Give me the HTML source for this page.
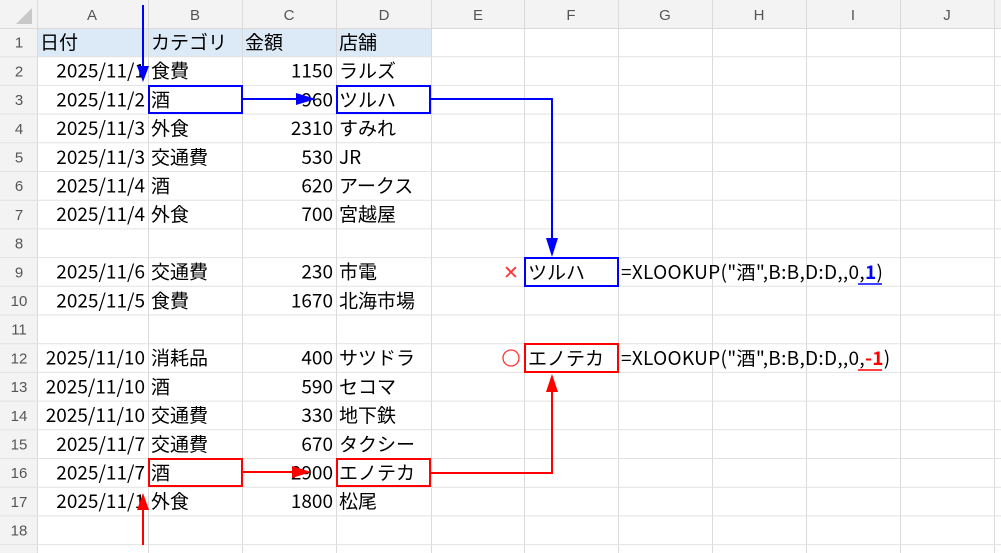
<!DOCTYPE html>
<html><head><meta charset="utf-8"><style>
html,body{margin:0;padding:0;background:#fff;width:1001px;height:553px;overflow:hidden}
svg{display:block}
text{font-family:"Noto Sans CJK JP","Liberation Sans",sans-serif;font-size:19px;fill:#000}
.h{font-family:"Liberation Sans",sans-serif;font-size:15px;fill:#555;text-anchor:middle}
.r{text-anchor:end}
.f{letter-spacing:0.3px}
</style></head><body>
<svg width="1001" height="553" xmlns="http://www.w3.org/2000/svg">
<rect x="0" y="0" width="1001" height="28" fill="#f3f3f3"/>
<rect x="0" y="28" width="37" height="525" fill="#f3f3f3"/>
<rect x="37" y="28" width="394" height="28.7" fill="#dce9f6"/>
<g stroke="#dadada" stroke-width="1">
<line x1="0" y1="28.5" x2="1001" y2="28.5"/>
<line x1="37.5" y1="0" x2="37.5" y2="553"/>
<line x1="148.5" y1="0" x2="148.5" y2="553"/><line x1="242.5" y1="0" x2="242.5" y2="553"/>
<line x1="336.5" y1="0" x2="336.5" y2="553"/><line x1="431.5" y1="0" x2="431.5" y2="553"/>
<line x1="524.5" y1="0" x2="524.5" y2="553"/><line x1="618.5" y1="0" x2="618.5" y2="553"/>
<line x1="712.5" y1="0" x2="712.5" y2="553"/><line x1="806.5" y1="0" x2="806.5" y2="553"/>
<line x1="900.5" y1="0" x2="900.5" y2="553"/><line x1="994.5" y1="0" x2="994.5" y2="553"/>
</g>
<g stroke="#e2e2e2" id="rl"></g>
<polygon points="32,24 32,8 16,24" fill="#c8c8c8"/>
<text class="h" x="92" y="20">A</text><text class="h" x="195" y="20">B</text><text class="h" x="289" y="20">C</text><text class="h" x="384" y="20">D</text><text class="h" x="478" y="20">E</text><text class="h" x="571" y="20">F</text><text class="h" x="665" y="20">G</text><text class="h" x="759" y="20">H</text><text class="h" x="853" y="20">I</text><text class="h" x="947" y="20">J</text>
<script>
var s=document.querySelector('svg'),g=document.getElementById('rl'),ns='http://www.w3.org/2000/svg';
for(var r=1;r<=18;r++){var y=28+r*28.7;var l=document.createElementNS(ns,'line');l.setAttribute('x1',0);l.setAttribute('x2',1001);l.setAttribute('y1',y);l.setAttribute('y2',y);g.appendChild(l);
var t=document.createElementNS(ns,'text');t.setAttribute('class','h');t.setAttribute('x',19);t.setAttribute('y',y-9);t.textContent=r;s.appendChild(t);}
var d=[["日付","カテゴリ","金額","店舗"],["2025/11/1","食費","1150","ラルズ"],["2025/11/2","酒","960","ツルハ"],["2025/11/3","外食","2310","すみれ"],["2025/11/3","交通費","530","JR"],["2025/11/4","酒","620","アークス"],["2025/11/4","外食","700","宮越屋"],null,["2025/11/6","交通費","230","市電"],["2025/11/5","食費","1670","北海市場"],null,["2025/11/10","消耗品","400","サツドラ"],["2025/11/10","酒","590","セコマ"],["2025/11/10","交通費","330","地下鉄"],["2025/11/7","交通費","670","タクシー"],["2025/11/7","酒","2900","エノテカ"],["2025/11/1","外食","1800","松尾"]];
function tx(x,y,c,cls){var t=document.createElementNS(ns,'text');t.setAttribute('x',x);t.setAttribute('y',y);if(cls)t.setAttribute('class',cls);t.textContent=c;s.appendChild(t);}
d.forEach(function(row,i){if(!row)return;var y=28+i*28.7+21;
if(i==0){tx(40,y,row[0]);tx(151,y,row[1]);tx(245,y,row[2]);}
else{tx(145,y,row[0],'r');tx(333,y,row[2],'r');tx(151,y,row[1]);}
tx(339,y,row[3]);});
</script>
<text x="528" y="279">ツルハ</text>
<text class="f" x="621" y="279">=XLOOKUP("酒",B:B,D:D,,0,<tspan font-weight="bold" style="fill:#00f">1</tspan>)</text>
<line x1="858" y1="284" x2="882" y2="284" stroke="#00f" stroke-width="1.5"/>
<text x="503" y="279" style="fill:#f33">✕</text>
<text x="528" y="365">エノテカ</text>
<text class="f" x="621" y="365">=XLOOKUP("酒",B:B,D:D,,0,<tspan style="fill:#f00" font-weight="bold">-1</tspan>)</text>
<line x1="858" y1="370" x2="882" y2="370" stroke="#f00" stroke-width="1.5"/>
<circle cx="511" cy="358" r="8" fill="none" stroke="#f33" stroke-width="1.3"/>
<g fill="none" stroke="#0000ff" stroke-width="2">
<rect x="149" y="86" width="93" height="27"/><rect x="337" y="86" width="93" height="27"/><rect x="525" y="258" width="93" height="28"/>
<line x1="143" y1="5" x2="143" y2="68"/><line x1="243" y1="99" x2="298" y2="99"/>
<polyline points="431,99 552,99 552,240"/>
</g>
<g fill="#0000ff"><polygon points="137,66 149,66 143,82"/><polygon points="296,93 296,105 316,99"/><polygon points="546,238 558,238 552,257"/></g>
<g fill="none" stroke="#ff0000" stroke-width="2">
<rect x="149" y="459" width="93" height="27"/><rect x="337" y="459" width="93" height="27"/><rect x="525" y="344" width="93" height="28"/>
<line x1="143" y1="545" x2="143" y2="508"/><line x1="243" y1="472" x2="294" y2="472"/>
<polyline points="431,473 552,473 552,390"/>
</g>
<g fill="#ff0000"><polygon points="137,510 149,510 143,493"/><polygon points="292,466 292,478 311,472"/><polygon points="546,392 558,392 552,374"/></g>
</svg>
</body></html>
